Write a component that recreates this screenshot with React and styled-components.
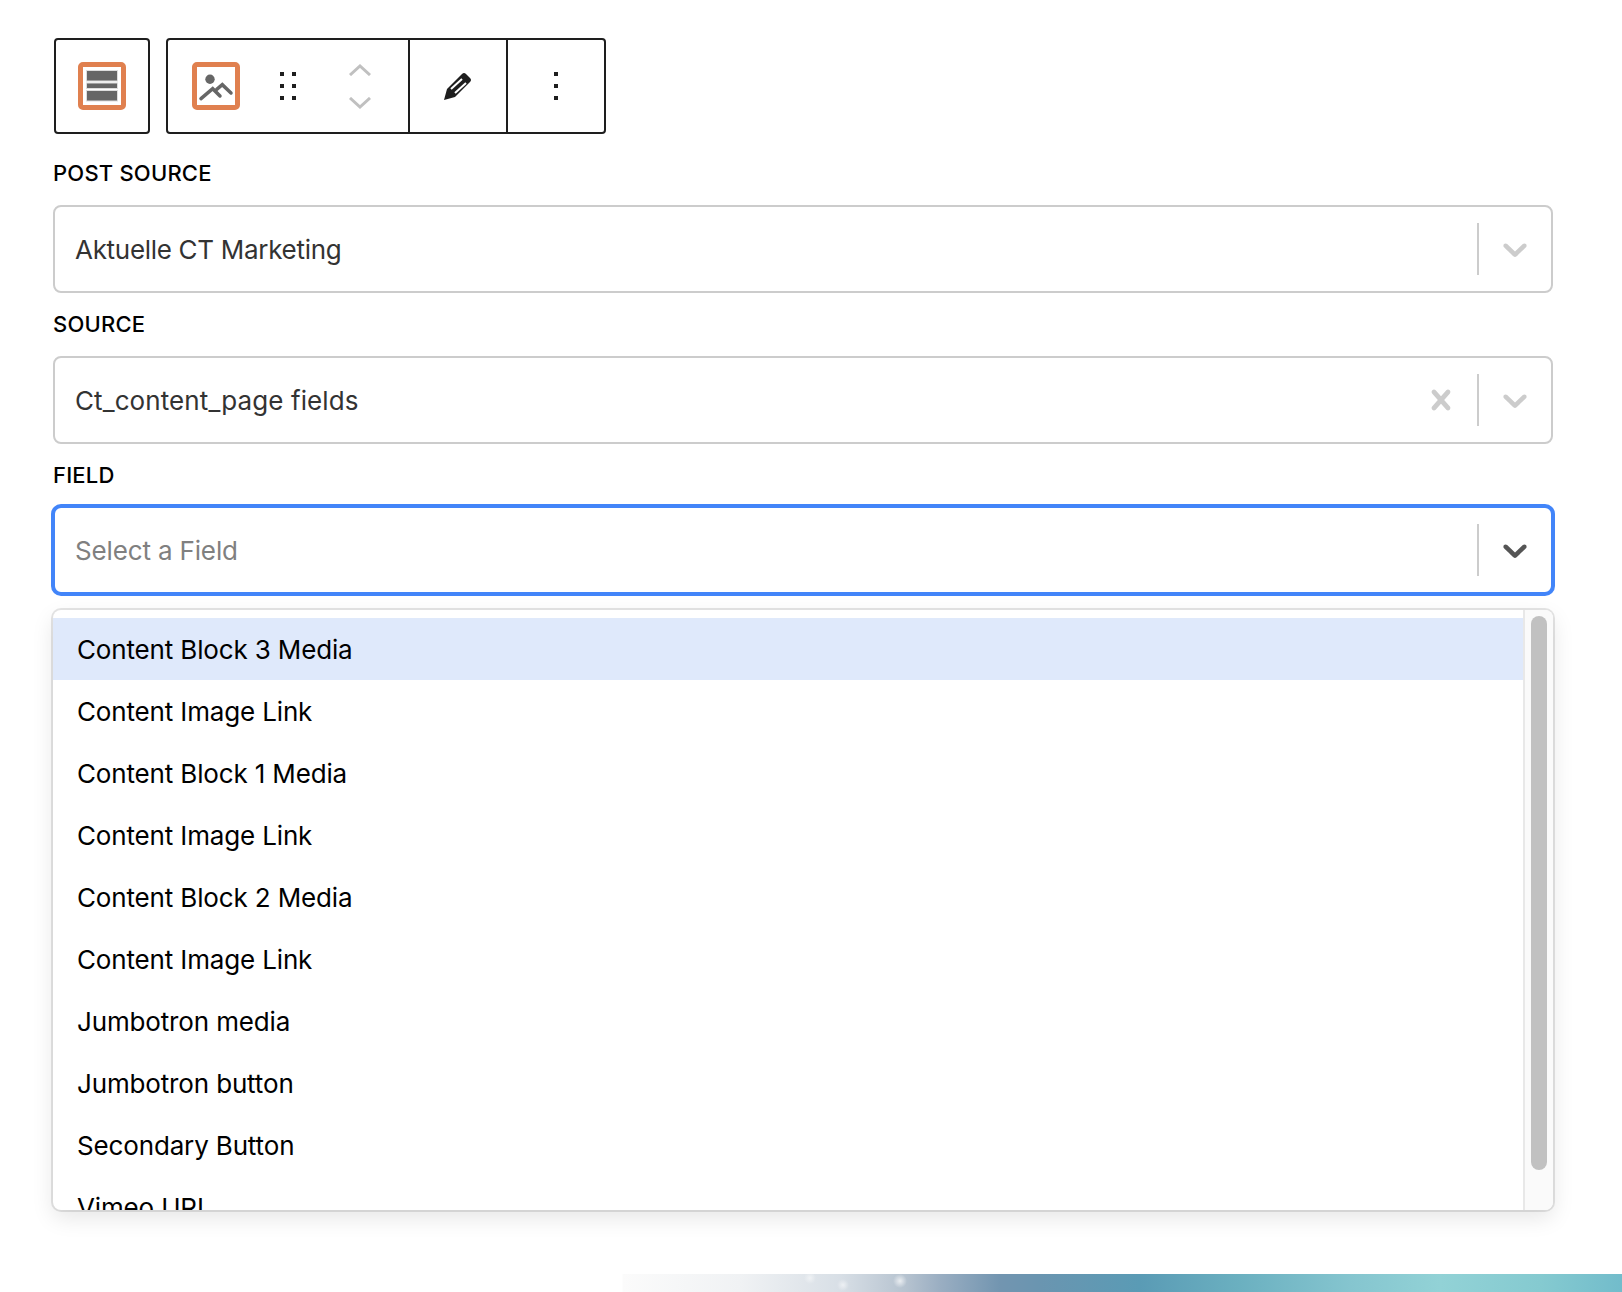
import React from 'react'
import styled, { createGlobalStyle } from 'styled-components'

const GlobalStyle = createGlobalStyle`
  html, body {
    margin: 0;
    padding: 0;
    background: #fff;
    overflow: hidden;
  }
  body {
    font-family: Inter, "Liberation Sans", sans-serif;
    color: #000;
  }
`

const Page = styled.div`
  width: 1622px;
  height: 1292px;
  overflow: hidden;
`

const Content = styled.div`
  padding: 38px 69px 0 53px;
`

const Toolbar = styled.div`
  display: flex;
  gap: 16px;
  margin-bottom: 23px;
  padding-left: 1px;
`

const ToolGroup = styled.div`
  display: flex;
  height: 96px;
  box-sizing: border-box;
  border: 2px solid #1e1e1e;
  border-radius: 4px;
`

const ToolSection = styled.div`
  display: flex;
  align-items: center;
  box-sizing: border-box;
  width: ${p => p.$width}px;
  padding-left: ${p => p.$pad || 0}px;
  justify-content: ${p => (p.$pad ? 'flex-start' : 'center')};
  & + & {
    border-left: 2px solid #1e1e1e;
  }
`

const BlockIcon = styled.div`
  width: 48px;
  height: 48px;
  box-sizing: border-box;
  border: 5px solid #e0804f;
  border-radius: 5px;
  background: #fff;
  flex: none;
  svg {
    display: block;
  }
`

const DotGrid = styled.svg`
  display: block;
  flex: none;
  margin-left: ${p => p.$left || 0}px;
`

const Movers = styled.div`
  display: flex;
  flex-direction: column;
  gap: 21px;
  margin-left: 52px;
  svg {
    display: block;
  }
`

const FieldLabel = styled.div`
  font-size: 22px;
  font-weight: 500;
  line-height: 32px;
  letter-spacing: 0.2px;
  text-transform: uppercase;
  margin: ${p => (p.$first ? '0' : '15px')} 0 ${p => p.$below || 16}px;
`

const Select = styled.div`
  display: flex;
  align-items: center;
  height: 88px;
  box-sizing: border-box;
  border: 2px solid ${p => (p.$focused ? '#4285f9' : '#ccc')};
  border-radius: 8px;
  box-shadow: ${p => (p.$focused ? '0 0 0 2px #4285f9' : 'none')};
  background: #fff;
  padding-left: 20px;
`

const SelectValue = styled.div`
  flex: 1;
  font-size: 26px;
  letter-spacing: ${p => p.$tracking}px;
  color: ${p => (p.$placeholder ? '#808080' : '#333')};
`

const Separator = styled.div`
  width: 2px;
  height: 52px;
  background: #ccc;
`

const IndicatorBtn = styled.div`
  width: 40px;
  height: 40px;
  margin-left: ${p => p.$left || 0}px;
  margin-right: ${p => p.$right || 0}px;
  color: ${p => (p.$dark ? '#555' : '#ccc')};
  svg {
    display: block;
    fill: currentColor;
  }
`

const MenuShell = styled.div`
  display: flex;
  height: 600px;
  margin-top: 16px;
  border-radius: 8px;
  background: #fff;
  box-shadow: 0 0 0 2px rgba(0, 0, 0, 0.1), 0 8px 22px rgba(0, 0, 0, 0.1);
`

const OptionList = styled.div`
  flex: 1;
  padding-top: 8px;
  overflow: hidden;
  border-radius: 8px 0 0 8px;
`

const Option = styled.div`
  height: 62px;
  line-height: 64px;
  padding-left: 24px;
  font-size: 26px;
  letter-spacing: -0.15px;
  color: #000;
  background: ${p => (p.$active ? '#dfe9fb' : 'transparent')};
`

const ScrollTrack = styled.div`
  width: 30px;
  box-sizing: border-box;
  background: #fafafa;
  border-left: 2px solid #e8e8e8;
  border-radius: 0 8px 8px 0;
  padding: 6px 0 0 6px;
`

const ScrollThumb = styled.div`
  width: 16px;
  height: 554px;
  border-radius: 8px;
  background: #c1c1c1;
`

const Band = styled.div`
  height: 18px;
  margin-top: 64px;
  background:
    radial-gradient(circle 6px at 810px 4px, rgba(255, 255, 255, 0.5), rgba(255, 255, 255, 0)),
    radial-gradient(circle 6px at 843px 11px, rgba(255, 255, 255, 0.55), rgba(255, 255, 255, 0)),
    radial-gradient(circle 7px at 900px 7px, rgba(255, 255, 255, 0.7), rgba(255, 255, 255, 0)),
    linear-gradient(
      90deg,
      #fff 0,
      #fff 622px,
      #fbfbfb 623px,
      #f0f2f4 740px,
      #d8dfe6 840px,
      #b5c2cf 907px,
      #9aaec2 940px,
      #7295b0 1000px,
      #6a95b0 1040px,
      #5a9bb5 1140px,
      #6bb0c0 1240px,
      #85c5cf 1350px,
      #92d2d6 1440px,
      #85cad0 1540px,
      #72bccb 1622px
    );
`

const Chevron = () => (
  <svg width="40" height="40" viewBox="0 0 20 20">
    <path d="M4.516 7.548c0.436-0.446 1.043-0.481 1.576 0l3.908 3.747 3.908-3.747c0.533-0.481 1.141-0.446 1.574 0 0.436 0.445 0.408 1.197 0 1.615-0.406 0.418-4.695 4.502-4.695 4.502-0.217 0.223-0.502 0.335-0.787 0.335s-0.57-0.112-0.789-0.335c0 0-4.287-4.084-4.695-4.502s-0.436-1.17 0-1.615z" />
  </svg>
)

const Cross = () => (
  <svg width="40" height="40" viewBox="0 0 20 20">
    <path d="M14.348 14.849c-0.469 0.469-1.229 0.469-1.697 0l-2.651-3.030-2.651 3.029c-0.469 0.469-1.229 0.469-1.697 0-0.469-0.469-0.469-1.229 0-1.697l2.758-3.15-2.759-3.152c-0.469-0.469-0.469-1.228 0-1.697s1.228-0.469 1.697 0l2.652 3.031 2.651-3.031c0.469-0.469 1.228-0.469 1.697 0s0.469 1.229 0 1.697l-2.758 3.152 2.758 3.15c0.469 0.469 0.469 1.229 0 1.698z" />
  </svg>
)

const Dots = ({ cols, left }) => {
  const w = cols === 2 ? 16 : 4
  return (
    <DotGrid $left={left} width={w} height="28" viewBox={`0 0 ${w} 28`}>
      {[0, 12, 24].map(y =>
        (cols === 2 ? [0, 12] : [0]).map(x => <rect key={`${x}-${y}`} x={x} y={y} width="4" height="4" fill="#1e1e1e" />)
      )}
    </DotGrid>
  )
}

const MoverArrow = ({ up }) => (
  <svg width="24" height="12" viewBox="0 0 24 12">
    <path d={up ? 'M2 11L12 2l10 9' : 'M2 1l10 9 10-9'} fill="none" stroke="#c0c0c0" strokeWidth="3" />
  </svg>
)

const options = [
  'Content Block 3 Media',
  'Content Image Link',
  'Content Block 1 Media',
  'Content Image Link',
  'Content Block 2 Media',
  'Content Image Link',
  'Jumbotron media',
  'Jumbotron button',
  'Secondary Button',
  'Vimeo URL',
]

export default function App() {
  return (
    <Page>
      <GlobalStyle />
      <Content>
        <Toolbar>
          <ToolGroup>
            <ToolSection $width={92}>
              <BlockIcon>
                <svg width="38" height="38" viewBox="1 1 38 38">
                  <g fill="#666" stroke="#ddd" strokeWidth="1">
                    <rect x="4.500" y="4.500" width="31" height="10.500" />
                    <rect x="4.500" y="17" width="31" height="5.500" />
                    <rect x="4.500" y="24.500" width="31" height="10.500" />
                  </g>
                </svg>
              </BlockIcon>
            </ToolSection>
          </ToolGroup>
          <ToolGroup>
            <ToolSection $width={240} $pad={24}>
              <BlockIcon>
                <svg width="38" height="38" viewBox="1 1 38 38">
                  <circle cx="14" cy="13.300" r="4.700" fill="#666" />
                  <path d="M5 32.700l11.700-10 7.300 7.300M20.700 23.300l5.600-4.600 8.700 8.300" fill="none" stroke="#666" strokeWidth="3.500" strokeLinecap="round" />
                </svg>
              </BlockIcon>
              <Dots cols={2} left={40} />
              <Movers>
                <MoverArrow up />
                <MoverArrow />
              </Movers>
            </ToolSection>
            <ToolSection $width={98}>
              <svg width="28" height="28" viewBox="0 0 28 28">
                <path d="M0 28l3-11L18 2q2-2 4 0l4 4q2 2 0 4L11 25z" fill="#1e1e1e" />
                <path d="M7 17L18 7M11 21L22 11" stroke="#fff" strokeWidth="2" fill="none" />
              </svg>
            </ToolSection>
            <ToolSection $width={98}>
              <Dots cols={1} />
            </ToolSection>
          </ToolGroup>
        </Toolbar>

        <FieldLabel $first>Post Source</FieldLabel>
        <Select>
          <SelectValue $tracking={-0.3}>Aktuelle CT Marketing</SelectValue>
          <Separator />
          <IndicatorBtn $left={16} $right={16}><Chevron /></IndicatorBtn>
        </Select>

        <FieldLabel>Source</FieldLabel>
        <Select>
          <SelectValue $tracking={0.1}>Ct_content_page fields</SelectValue>
          <IndicatorBtn $right={16}><Cross /></IndicatorBtn>
          <Separator />
          <IndicatorBtn $left={16} $right={16}><Chevron /></IndicatorBtn>
        </Select>

        <FieldLabel $below={15}>Field</FieldLabel>
        <Select $focused>
          <SelectValue $placeholder $tracking={-0.15}>Select a Field</SelectValue>
          <Separator />
          <IndicatorBtn $left={16} $right={16} $dark><Chevron /></IndicatorBtn>
        </Select>

        <MenuShell>
          <OptionList>
            {options.map((o, i) => (
              <Option key={i} $active={i === 0}>{o}</Option>
            ))}
          </OptionList>
          <ScrollTrack>
            <ScrollThumb />
          </ScrollTrack>
        </MenuShell>
      </Content>
      <Band />
    </Page>
  )
}
